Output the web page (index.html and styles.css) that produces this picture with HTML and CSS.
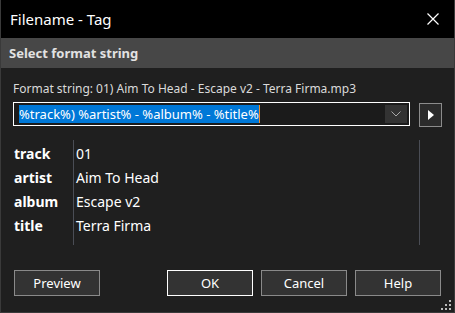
FILE: index.html
```html
<!DOCTYPE html>
<html>
<head>
  <title>Filename - Tag</title>
  <link rel="stylesheet" href="styles.css">
</head>
<body>
  <div class="window">
    <div class="titlebar">
      <span class="title">Filename - Tag</span>
      <svg class="close" width="12" height="12" viewBox="0 0 12 12">
        <path d="M0.5 0.5 L11.5 11.5 M11.5 0.5 L0.5 11.5" stroke="#fff" stroke-width="1.2"/>
      </svg>
    </div>
    <div class="section-head">Select format string</div>
    <div class="content">
      <div class="format-label">Format string: 01) Aim To Head - Escape v2 - Terra Firma.mp3</div>
      <div class="combo-row">
        <div class="combo">
          <div class="combo-text"><span class="selected">%track%) %artist% - %album% - %title%</span><span class="caret"></span></div>
          <div class="combo-drop">
            <svg width="10" height="6" viewBox="0 0 10 6">
              <path d="M0.5 0.5 L5 5 L9.5 0.5" stroke="#a8a8a8" stroke-width="1" fill="none"/>
            </svg>
          </div>
        </div>
        <div class="play-btn">
          <svg width="6" height="10" viewBox="0 0 6 10">
            <path d="M0 0 L6 5 L0 10 Z" fill="#fff"/>
          </svg>
        </div>
      </div>
      <div class="fields">
        <div class="key">track</div><div class="value">01</div>
        <div class="key">artist</div><div class="value">Aim To Head</div>
        <div class="key">album</div><div class="value">Escape v2</div>
        <div class="key">title</div><div class="value">Terra Firma</div>
      </div>
      <div class="buttons">
        <button class="btn">Preview</button>
        <div class="spacer"></div>
        <button class="btn default">OK</button>
        <button class="btn">Cancel</button>
        <button class="btn">Help</button>
      </div>
    </div>
    <svg class="grip" width="10" height="10" viewBox="0 0 10 10">
      <rect x="8" y="0" width="2" height="2" fill="#bbb"/>
      <rect x="4" y="4" width="2" height="2" fill="#bbb"/>
      <rect x="8" y="4" width="2" height="2" fill="#bbb"/>
      <rect x="0" y="8" width="2" height="2" fill="#bbb"/>
      <rect x="4" y="8" width="2" height="2" fill="#bbb"/>
      <rect x="8" y="8" width="2" height="2" fill="#bbb"/>
    </svg>
  </div>
</body>
</html>
```

FILE: styles.css
```css
body {
  margin: 0;
  background-color: #1f1f1f;
  font-family: "Noto Sans", "Open Sans", sans-serif;
}

.window {
  position: relative;
  width: 455px;
  height: 313px;
  box-sizing: border-box;
  border: 1px solid #3a3a3a;
  border-top: none;
  background-color: #1f1f1f;
  display: flex;
  flex-direction: column;
}

.titlebar {
  height: 38px;
  background-color: #000;
  display: flex;
  align-items: center;
  justify-content: space-between;
  padding: 0 15px 0 9px;
}

.title {
  color: #fff;
  font-size: 15px;
}

.section-head {
  height: 30px;
  line-height: 30px;
  background-color: #474747;
  color: #e2e2e2;
  font-size: 13px;
  font-weight: bold;
  padding-left: 8px;
}

.content {
  padding: 12px 12px 0 12px;
  display: flex;
  flex-direction: column;
}

.format-label {
  color: #dadada;
  font-size: 12px;
  line-height: 18px;
  height: 22px;
}

.combo-row {
  display: flex;
  align-items: flex-start;
}

.combo {
  width: 397px;
  height: 24px;
  box-sizing: border-box;
  border: 1px solid #fff;
  background-color: #1b1b1b;
  display: flex;
  padding: 2px;
}

.combo-text {
  flex: 1;
  display: flex;
  align-items: center;
  padding-left: 3px;
}

.selected {
  background-color: #0078d7;
  color: #fff;
  font-size: 13px;
  line-height: 18px;
  white-space: nowrap;
}

.caret {
  width: 1px;
  height: 18px;
  background-color: #f08a24;
}

.combo-drop {
  width: 22px;
  background-color: #333;
  display: flex;
  align-items: center;
  justify-content: center;
}

.play-btn {
  margin-left: 9px;
  margin-top: 1px;
  width: 23px;
  height: 24px;
  box-sizing: border-box;
  border: 1px solid #8c8c8c;
  background-color: #2b2b2b;
  display: flex;
  align-items: center;
  justify-content: center;
}

.fields {
  margin-top: 13px;
  width: 407px;
  height: 105px;
  box-sizing: border-box;
  border-right: 1px solid #4a4d55;
  display: grid;
  grid-template-columns: 60px 1fr;
  grid-auto-rows: 24px;
  padding-top: 2px;
  background: linear-gradient(#4a4d55, #4a4d55) 60px 0 / 1px 100% no-repeat;
}

.key {
  color: #fff;
  font-weight: bold;
  font-size: 14px;
  line-height: 24px;
  padding-left: 1px;
}

.value {
  color: #fff;
  font-size: 14px;
  line-height: 24px;
  padding-left: 3px;
}

.buttons {
  margin-top: 25px;
  display: flex;
  gap: 8px;
  padding-left: 1px;
}

.spacer {
  width: 51px;
}

.btn {
  width: 86px;
  height: 26px;
  box-sizing: border-box;
  border: 1px solid #8a8a8a;
  background-color: #333;
  color: #fff;
  font-family: "Noto Sans", "Open Sans", sans-serif;
  font-size: 13px;
  padding: 0;
}

.btn.default {
  border-color: #fff;
}

.grip {
  position: absolute;
  right: 3px;
  bottom: 2px;
}
```
